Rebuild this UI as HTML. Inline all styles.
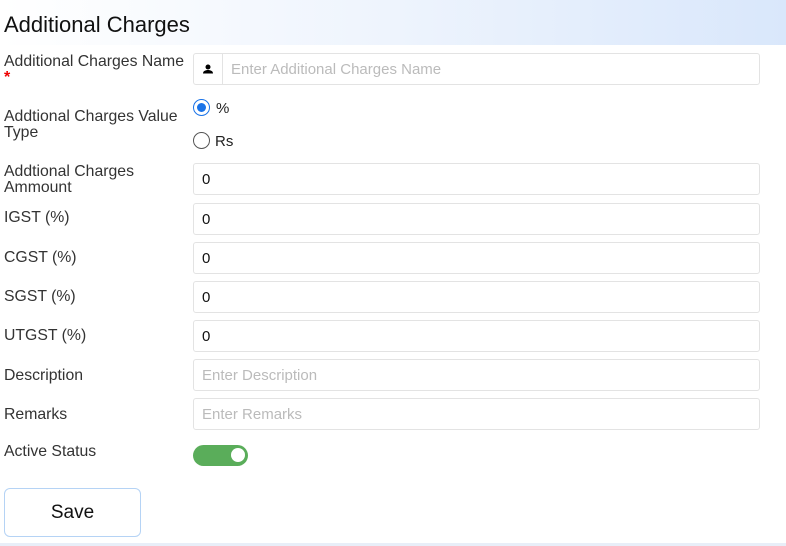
<!DOCTYPE html>
<html><head><style>
body{margin:0;width:786px;height:546px;background:#fff;font-family:"Liberation Sans",sans-serif;position:relative;overflow:hidden;color:#222}
.hdr{position:absolute;left:0;top:0;width:786px;height:45px;background:linear-gradient(90deg,#fff 0%,#eef4fd 50%,#d9e7fb 100%)}
.hdr span{position:absolute;left:4px;top:12px;font-size:22px;color:#111}
.lbl{position:absolute;left:4px;font-size:15.8px;color:#333;line-height:16px}
.in{position:absolute;left:193px;width:557px;height:30px;border:1px solid #e3e3e3;border-radius:3px;font-size:15px;line-height:31px;padding-left:8px;color:#111}
.ph{color:#bbb}
.bot{position:absolute;left:0;top:543px;width:786px;height:3px;background:#e8eef8}
</style></head><body>
<div class="hdr"><span>Additional Charges</span></div>
<div class="lbl" style="top:54px">Additional Charges Name<br><span style="color:#e00;font-size:16px;font-weight:bold">*</span></div>
<div style="position:absolute;left:193px;top:53px;width:28px;height:30px;border:1px solid #e3e3e3;border-radius:3px 0 0 3px">
<svg width="28" height="30" viewBox="0 0 28 30"><circle cx="14" cy="13" r="2.5" fill="#000"/><path d="M9 19.5c0-2.5 2.5-3.5 5-3.5s5 1 5 3.5z" fill="#000"/></svg></div>
<div class="in ph" style="left:222px;top:53px;width:528px;border-radius:0 3px 3px 0">Enter Additional Charges Name</div>
<div class="lbl" style="top:109px">Addtional Charges Value<br>Type</div>
<div style="position:absolute;left:193px;top:99px;width:17px;height:17px;border:1.5px solid #1a73e8;border-radius:50%;box-sizing:border-box"><div style="margin:2.5px;width:9px;height:9px;border-radius:50%;background:#1a73e8"></div></div>
<div style="position:absolute;left:216px;top:100px;font-size:15px">%</div>
<div style="position:absolute;left:193px;top:132px;width:17px;height:17px;border:1.5px solid #555;border-radius:50%;box-sizing:border-box"></div>
<div style="position:absolute;left:215px;top:133px;font-size:15px">Rs</div>
<div class="lbl" style="top:164px">Addtional Charges<br>Ammount</div>
<div class="in" style="top:163px">0</div>
<div class="lbl" style="top:210px">IGST (%)</div><div class="in" style="top:203px">0</div>
<div class="lbl" style="top:250px">CGST (%)</div><div class="in" style="top:242px">0</div>
<div class="lbl" style="top:289px">SGST (%)</div><div class="in" style="top:281px">0</div>
<div class="lbl" style="top:328px">UTGST (%)</div><div class="in" style="top:320px">0</div>
<div class="lbl" style="top:368px">Description</div><div class="in ph" style="top:359px">Enter Description</div>
<div class="lbl" style="top:407px">Remarks</div><div class="in ph" style="top:398px">Enter Remarks</div>
<div class="lbl" style="top:444px">Active Status</div>
<div style="position:absolute;left:193px;top:445px;width:55px;height:21px;border-radius:11px;background:#5aad5a"><div style="position:absolute;left:38px;top:3px;width:14px;height:14px;border-radius:50%;background:#fff"></div></div>
<div style="position:absolute;left:4px;top:488px;width:135px;height:47px;border:1px solid #b5d3f5;border-radius:6px;text-align:center;line-height:47px;font-size:19px;color:#111">Save</div>
<div class="bot"></div>
</body></html>
